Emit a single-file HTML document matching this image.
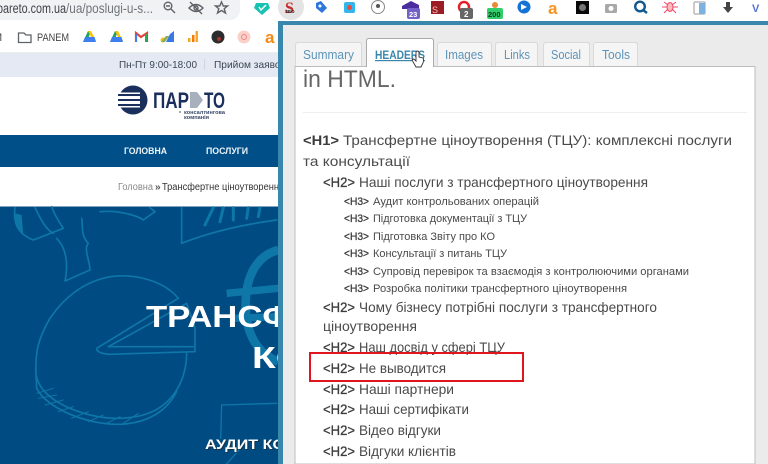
<!DOCTYPE html>
<html><head><meta charset="utf-8"><style>
html,body{margin:0;padding:0;width:768px;height:464px;overflow:hidden;background:#fff}
svg{display:block;filter:blur(.35px)}
text{font-family:"Liberation Sans",sans-serif}
.t{fill:#4a4a4a;font-size:14px}
.b{fill:#3c3c3c;font-size:14px;font-weight:bold}
.h2{fill:#3c3c3c;font-size:14px;stroke:#3c3c3c;stroke-width:.3}
.s{fill:#4a4a4a;font-size:11px}
.sb{fill:#3c3c3c;font-size:11px;stroke:#3c3c3c;stroke-width:.3}
.tab{fill:#5c93b8;font-size:13px}
.d{fill:none;stroke:#0f76a8;stroke-width:5;stroke-linecap:round;stroke-linejoin:round}
</style></head><body>
<svg width="768" height="464" viewBox="0 0 768 464" xmlns="http://www.w3.org/2000/svg">
<defs><clipPath id="c"><rect x="0" y="0" width="278" height="464"/></clipPath></defs>
<rect width="768" height="464" fill="#fff"/>

<!-- address bar -->
<path d="M0 0H240V10A10 10 0 0 1 230 20H0Z" fill="#f0f2f4"/>
<text x="-3" y="13" font-size="13.5" fill="#3f4348" textLength="69" lengthAdjust="spacingAndGlyphs">pareto.com.ua</text>
<text x="66" y="13" font-size="13.5" fill="#70757a" textLength="87" lengthAdjust="spacingAndGlyphs">/ua/poslugi-u-s...</text>
<g fill="none" stroke="#5f6368" stroke-width="1.4">
<circle cx="168" cy="6" r="3.8"/><path d="M171 9L175 13M166 6H170"/>
<path d="M189 8Q196 1 203 8Q196 15 189 8ZM190 2L202 14"/><circle cx="196" cy="8" r="2"/>
<path d="M221.500 2L223.300 6H227.500L224.200 8.700L225.500 13L221.500 10.500L217.500 13L218.800 8.700L215.500 6H219.700Z"/>
</g>
<circle cx="291" cy="7" r="13" fill="#e4e4e4"/>

<!-- bookmarks bar -->
<rect y="52.500" width="278" height="1" fill="#d5d8dd"/>
<text x="-7" y="41" font-size="11" fill="#444">M</text>
<path d="M18.500 33H24L26 35H31V42.500H18.500Z" fill="none" stroke="#5f6368" stroke-width="1.300"/>
<text x="37" y="41" font-size="11" fill="#444" textLength="32" lengthAdjust="spacingAndGlyphs">PANEM</text>
<g><path d="M83 42L88 31H91L87 42Z" fill="#1fa463"/><path d="M88 31H91L96 41H93Z" fill="#ffc107"/><path d="M83 42H96L94.500 37H85Z" fill="#3d7ff0"/></g>
<g transform="translate(27 0)"><path d="M83 42L88 31H91L87 42Z" fill="#1fa463"/><path d="M88 31H91L96 41H93Z" fill="#ffc107"/><path d="M83 42H96L94.500 37H85Z" fill="#3d7ff0"/></g>
<path d="M136 42V33L141 37L147 33V42" fill="none" stroke="#e0453a" stroke-width="2.200"/><rect x="135" y="34" width="2" height="8" fill="#3d7ff0"/><rect x="145" y="34" width="2" height="8" fill="#2aa952"/>
<path d="M166 42L170 34L174 31V42Z" fill="#3b78e7"/><circle cx="163" cy="40" r="2.500" fill="#f6c026"/><path d="M161 42L166 36L169 36L165 42Z" fill="#88b04b"/>
<rect x="188" y="38" width="2.500" height="4" fill="#f9a825"/><rect x="192" y="35" width="2.500" height="7" fill="#f57c00"/><rect x="195.500" y="31" width="2.500" height="11" fill="#f9a825"/>
<circle cx="218" cy="37" r="6.500" fill="#2c2c2c"/><circle cx="219" cy="39" r="2" fill="#a33"/>
<circle cx="244" cy="37" r="6.500" fill="#fbd0c8"/><circle cx="244" cy="37" r="2.500" fill="none" stroke="#e88" stroke-width="1"/>
<text x="265" y="43" font-size="17" font-weight="bold" fill="#f58a12">a</text>

<!-- page strips -->
<rect y="53" width="278" height="24" fill="#e4e9f3"/>
<text x="119" y="68" font-size="10.500" fill="#3c4654" textLength="78" lengthAdjust="spacingAndGlyphs">Пн-Пт 9:00-18:00</text>
<rect x="204" y="59" width="1" height="11" fill="#d0d5dd"/>
<g clip-path="url(#c)"><text x="214" y="68" font-size="10.500" fill="#3c4654" textLength="71" lengthAdjust="spacingAndGlyphs">Прийом заявок</text></g>

<!-- logo -->
<circle cx="133" cy="100" r="14.500" fill="#1a2f5c"/>
<rect x="118" y="92.500" width="22" height="15" fill="#fff"/>
<g fill="#1a2f5c"><rect x="118" y="94" width="23" height="2"/><rect x="118" y="99" width="23" height="2"/><rect x="118" y="104" width="23" height="2"/></g>
<text x="153" y="108" font-size="22" font-weight="bold" fill="#1a2f5c" textLength="36" lengthAdjust="spacingAndGlyphs">ПАР</text>
<path d="M190 92H197L203 100L197 108H190Z" fill="#a9b0bd"/>
<text x="204" y="108" font-size="22" font-weight="bold" fill="#1a2f5c" textLength="21" lengthAdjust="spacingAndGlyphs">ТО</text>
<text x="184" y="114" font-size="5" font-weight="bold" fill="#3a4a6b" textLength="41" lengthAdjust="spacingAndGlyphs">консалтингова</text>
<text x="184" y="119" font-size="5" font-weight="bold" fill="#3a4a6b" textLength="25" lengthAdjust="spacingAndGlyphs">компанія</text>
<rect x="179" y="111" width="2" height="2" fill="#9aa"/>

<!-- nav -->
<rect y="135" width="278" height="32" fill="#004f88"/>
<text x="124" y="154" font-size="9.500" font-weight="bold" fill="#f0f4f8" textLength="43" lengthAdjust="spacingAndGlyphs">ГОЛОВНА</text>
<text x="206" y="154" font-size="9.500" font-weight="bold" fill="#f0f4f8" textLength="42" lengthAdjust="spacingAndGlyphs">ПОСЛУГИ</text>

<!-- breadcrumb -->
<text x="118" y="190" font-size="10" fill="#8a8a8a" textLength="35" lengthAdjust="spacingAndGlyphs">Головна</text>
<text x="155" y="190" font-size="10" font-weight="bold" fill="#555">»</text>
<g clip-path="url(#c)"><text x="162" y="190" font-size="10" fill="#333" textLength="122" lengthAdjust="spacingAndGlyphs">Трансфертне ціноутворення</text></g>

<!-- hero -->
<rect y="206.500" width="278" height="258" fill="#004b82"/>
<g clip-path="url(#c)">
<g transform="translate(0 205) scale(.3333)">
<path class="d" d="M535 280C490 225 400 205 330 215C250 230 190 280 150 340C115 400 105 440 108 510C120 570 190 610 270 630C350 650 440 640 490 600C540 560 560 500 560 445"/>
<path class="d" d="M535 280L290 430Q290 445 330 448L585 440L585 370L560 295L325 425L580 425"/>
<path class="d" d="M108 510L110 550C140 610 260 660 360 658C440 655 500 620 530 560"/>
<path class="d" style="stroke-width:3" d="M110 565L160 550M115 580L170 570M135 600L190 585M175 620L220 605M215 640L265 620M265 650L310 630M320 655L360 635M370 655L415 625"/>
<path class="d" d="M45 8C38 60 60 90 100 105L190 70C170 40 160 20 155 5M105 8C125 50 140 75 160 85"/>
<path style="fill:#0f76a8" d="M45 25C40 55 50 75 70 90L65 30Z"/>
<path class="d" d="M170 100C200 130 205 180 195 228L270 195C270 170 250 130 265 115C240 90 250 60 245 40"/>
<path class="d" d="M300 20C350 15 410 30 430 45L465 20L450 8"/>
<path class="d" d="M545 8L545 115C620 85 720 60 830 45"/>
<path class="d" style="stroke-width:9" d="M615 60L640 8M660 50L670 8M700 45L700 8M740 40L745 8M775 35L780 8"/>
<path class="d" style="stroke-width:26;stroke-linecap:butt" d="M835 135C760 155 737 230 737 300C737 370 760 440 835 470"/>
<path class="d" style="stroke-width:22;stroke-linecap:butt" d="M680 265L835 250M700 340L835 335"/>
<path class="d" style="stroke-width:4" d="M665 600L830 595M665 600L662 700M680 777L735 715"/>
</g>
<text x="146" y="327" font-size="31" font-weight="bold" fill="#fff" textLength="146" lengthAdjust="spacingAndGlyphs">ТРАНСФ</text>
<text x="252" y="368" font-size="31" font-weight="bold" fill="#fff" textLength="54" lengthAdjust="spacingAndGlyphs">КО</text>
<text x="206" y="450" font-size="13.500" font-weight="bold" fill="#222" opacity=".6" textLength="80" lengthAdjust="spacingAndGlyphs">АУДИТ КО</text>
<text x="205" y="449" font-size="13.500" font-weight="bold" fill="#fff" textLength="80" lengthAdjust="spacingAndGlyphs">АУДИТ КО</text>
</g>

<!-- extension icons -->
<path d="M256 3H268L270 8L262 15L254 8Z" fill="#17c2b0"/><path d="M259 7L261 10L266 5" fill="none" stroke="#fff" stroke-width="1.500"/>
<text x="285" y="13" font-size="16" font-weight="bold" fill="#c62828" style="font-family:'Liberation Serif',serif">S</text>
<text x="285" y="13" font-size="4.500" font-weight="bold" fill="#111">SEO</text>
<path d="M316 3L321 1L327 8L322 13L316 8Z" fill="#2f76dc"/><circle cx="320" cy="6" r="1.500" fill="#fff"/>
<rect x="344" y="2" width="11" height="11" rx="2" fill="#33b5ee"/><circle cx="349.500" cy="7.500" r="2.500" fill="#ea4c3c"/>
<circle cx="378" cy="7" r="6.500" fill="#fff" stroke="#888"/><circle cx="378" cy="6" r="2" fill="#555"/>
<path d="M402 6L411 1L419 5V9H402Z" fill="#4a2e9e"/><rect x="407" y="8" width="13" height="11" rx="2" fill="#7461c8"/><text x="409" y="17" font-size="7.500" fill="#fff" font-weight="bold">23</text>
<rect x="431" y="1" width="13" height="13" fill="#9b1c22"/><text x="432" y="13" font-size="9" fill="#e8c0c0">S</text>
<circle cx="464" cy="7" r="5" fill="none" stroke="#e5202a" stroke-width="2.500"/><rect x="460" y="8" width="13" height="11" rx="2" fill="#666"/><text x="464" y="17" font-size="8" fill="#fff" font-weight="bold">2</text>
<circle cx="495" cy="5" r="3" fill="#e88a36"/><rect x="487" y="8" width="16" height="11" rx="2" fill="#2fce6a"/><text x="488" y="17" font-size="7.500" fill="#0b3a1e" font-weight="bold">200</text>
<circle cx="524" cy="7" r="6.500" fill="#1673d6"/><path d="M521 4V10L527 7Z" fill="#fff"/>
<text x="548" y="14" font-size="17" font-weight="bold" fill="#f7931e">a</text>
<rect x="576" y="1" width="13" height="13" fill="#0a0a0a"/><circle cx="582.500" cy="7.500" r="3.500" fill="#777"/>
<rect x="605" y="4" width="12" height="9" rx="1.500" fill="#a8a8a8"/><circle cx="611" cy="8.500" r="2.500" fill="#fff"/>
<circle cx="640" cy="6.500" r="4.800" fill="none" stroke="#11598f" stroke-width="2.400"/><path d="M643 10L647 13" stroke="#11598f" stroke-width="2.400"/>
<g stroke="#f04868" stroke-width="1" fill="none"><ellipse cx="670" cy="7" rx="3" ry="4.500" fill="#fbb"/><path d="M664 2L668 5M676 2L672 5M662 7H667M678 7H673M664 13L668 9M676 13L672 9"/></g>
<rect x="694" y="2" width="11" height="12" rx="1" fill="#fff" stroke="#999"/><rect x="699" y="3" width="6" height="11" fill="#7db1e0"/>
<path d="M726 2H730V7H733L728 13L723 7H726Z" fill="#444"/>
<text x="752" y="12" font-size="11" font-weight="bold" fill="#5575cc">V</text>

<!-- panel -->
<rect x="278" y="21" width="490" height="443" fill="#3a87ad"/>
<rect x="283" y="25" width="485" height="439" fill="#ebebeb"/>

<!-- tabs -->
<g fill="#f5f5f5" stroke="#d9d9d9"><path d="M295.500 67V45Q295.500 42.500 298 42.500H359Q361.500 42.500 361.500 45V67Z"/>
<path d="M437.500 67V45Q437.500 42.500 440 42.500H489Q491.500 42.500 491.500 45V67Z"/>
<path d="M495.500 67V45Q495.500 42.500 498 42.500H535Q537.500 42.500 537.500 45V67Z"/>
<path d="M543.500 67V45Q543.500 42.500 546 42.500H587Q589.500 42.500 589.500 45V67Z"/>
<path d="M593.500 67V45Q593.500 42.500 596 42.500H635Q637.500 42.500 637.500 45V67Z"/></g>
<rect x="295" y="66.500" width="460" height="397.500" fill="#fff" stroke="#bdbdbd"/>
<path d="M366.500 67V41Q366.500 38.500 369 38.500H431Q433.500 38.500 433.500 41V67" fill="#fff" stroke="#aaa"/>
<rect x="367" y="65" width="66" height="3" fill="#fff"/>
<text x="303" y="59" class="tab" textLength="51" lengthAdjust="spacingAndGlyphs">Summary</text>
<text x="375" y="59" font-size="12" font-weight="bold" fill="#3a87ad" text-decoration="underline" textLength="50" lengthAdjust="spacingAndGlyphs">HEADERS</text>
<text x="445" y="59" class="tab" textLength="38" lengthAdjust="spacingAndGlyphs">Images</text>
<text x="504" y="59" class="tab" textLength="26" lengthAdjust="spacingAndGlyphs">Links</text>
<text x="551" y="59" class="tab" textLength="30" lengthAdjust="spacingAndGlyphs">Social</text>
<text x="602" y="59" class="tab" textLength="28" lengthAdjust="spacingAndGlyphs">Tools</text>
<path d="M416 52Q417.500 50 419 52V57L423 58Q424 60 423 63L421 67H416L412 60Q413 58 415 60L416 61Z" fill="#fff" stroke="#333" stroke-width=".9"/>

<!-- content -->
<text x="303" y="87" font-size="24" fill="#666" textLength="93" lengthAdjust="spacingAndGlyphs">in HTML.</text>
<rect x="303" y="112" width="444" height="1" fill="#eee"/>

<text x="303" y="145" class="b" textLength="36" lengthAdjust="spacingAndGlyphs">&lt;H1&gt;</text>
<text x="343" y="145" class="t" textLength="389" lengthAdjust="spacingAndGlyphs">Трансфертне ціноутворення (ТЦУ): комплексні послуги</text>
<text x="303" y="166" class="t" textLength="107" lengthAdjust="spacingAndGlyphs">та консультації</text>

<text x="323" y="187" class="h2" textLength="32" lengthAdjust="spacingAndGlyphs">&lt;H2&gt;</text>
<text x="359" y="187" class="t" textLength="289" lengthAdjust="spacingAndGlyphs">Наші послуги з трансфертного ціноутворення</text>

<text x="344" y="205" class="sb" textLength="25" lengthAdjust="spacingAndGlyphs">&lt;H3&gt;</text><text x="373" y="205" class="s" textLength="166" lengthAdjust="spacingAndGlyphs">Аудит контрольованих операцій</text>
<text x="344" y="222" class="sb" textLength="25" lengthAdjust="spacingAndGlyphs">&lt;H3&gt;</text><text x="373" y="222" class="s" textLength="154" lengthAdjust="spacingAndGlyphs">Підготовка документації з ТЦУ</text>
<text x="344" y="240" class="sb" textLength="25" lengthAdjust="spacingAndGlyphs">&lt;H3&gt;</text><text x="373" y="240" class="s" textLength="122" lengthAdjust="spacingAndGlyphs">Підготовка Звіту про КО</text>
<text x="344" y="257" class="sb" textLength="25" lengthAdjust="spacingAndGlyphs">&lt;H3&gt;</text><text x="373" y="257" class="s" textLength="134" lengthAdjust="spacingAndGlyphs">Консультації з питань ТЦУ</text>
<text x="344" y="275" class="sb" textLength="25" lengthAdjust="spacingAndGlyphs">&lt;H3&gt;</text><text x="373" y="275" class="s" textLength="316" lengthAdjust="spacingAndGlyphs">Супровід перевірок та взаємодія з контролюючими органами</text>
<text x="344" y="292" class="sb" textLength="25" lengthAdjust="spacingAndGlyphs">&lt;H3&gt;</text><text x="373" y="292" class="s" textLength="254" lengthAdjust="spacingAndGlyphs">Розробка політики трансфертного ціноутворення</text>

<text x="323" y="312" class="h2" textLength="32" lengthAdjust="spacingAndGlyphs">&lt;H2&gt;</text><text x="359" y="312" class="t" textLength="298" lengthAdjust="spacingAndGlyphs">Чому бізнесу потрібні послуги з трансфертного</text>
<text x="323" y="331" class="t" textLength="94" lengthAdjust="spacingAndGlyphs">ціноутворення</text>
<text x="323" y="352" class="h2" textLength="32" lengthAdjust="spacingAndGlyphs">&lt;H2&gt;</text><text x="359" y="352" class="t" textLength="146" lengthAdjust="spacingAndGlyphs">Наш досвід у сфері ТЦУ</text>
<text x="323" y="373" class="h2" textLength="32" lengthAdjust="spacingAndGlyphs">&lt;H2&gt;</text><text x="359" y="373" class="t" textLength="87" lengthAdjust="spacingAndGlyphs">Не выводится</text>
<text x="323" y="394" class="h2" textLength="32" lengthAdjust="spacingAndGlyphs">&lt;H2&gt;</text><text x="359" y="394" class="t" textLength="95" lengthAdjust="spacingAndGlyphs">Наші партнери</text>
<text x="323" y="414" class="h2" textLength="32" lengthAdjust="spacingAndGlyphs">&lt;H2&gt;</text><text x="359" y="414" class="t" textLength="110" lengthAdjust="spacingAndGlyphs">Наші сертифікати</text>
<text x="323" y="435" class="h2" textLength="32" lengthAdjust="spacingAndGlyphs">&lt;H2&gt;</text><text x="359" y="435" class="t" textLength="82" lengthAdjust="spacingAndGlyphs">Відео відгуки</text>
<text x="323" y="456" class="h2" textLength="32" lengthAdjust="spacingAndGlyphs">&lt;H2&gt;</text><text x="359" y="456" class="t" textLength="97" lengthAdjust="spacingAndGlyphs">Відгуки клієнтів</text>

<rect x="310" y="353" width="213" height="28" fill="none" stroke="#e0161f" stroke-width="2"/>
</svg>
</body></html>
